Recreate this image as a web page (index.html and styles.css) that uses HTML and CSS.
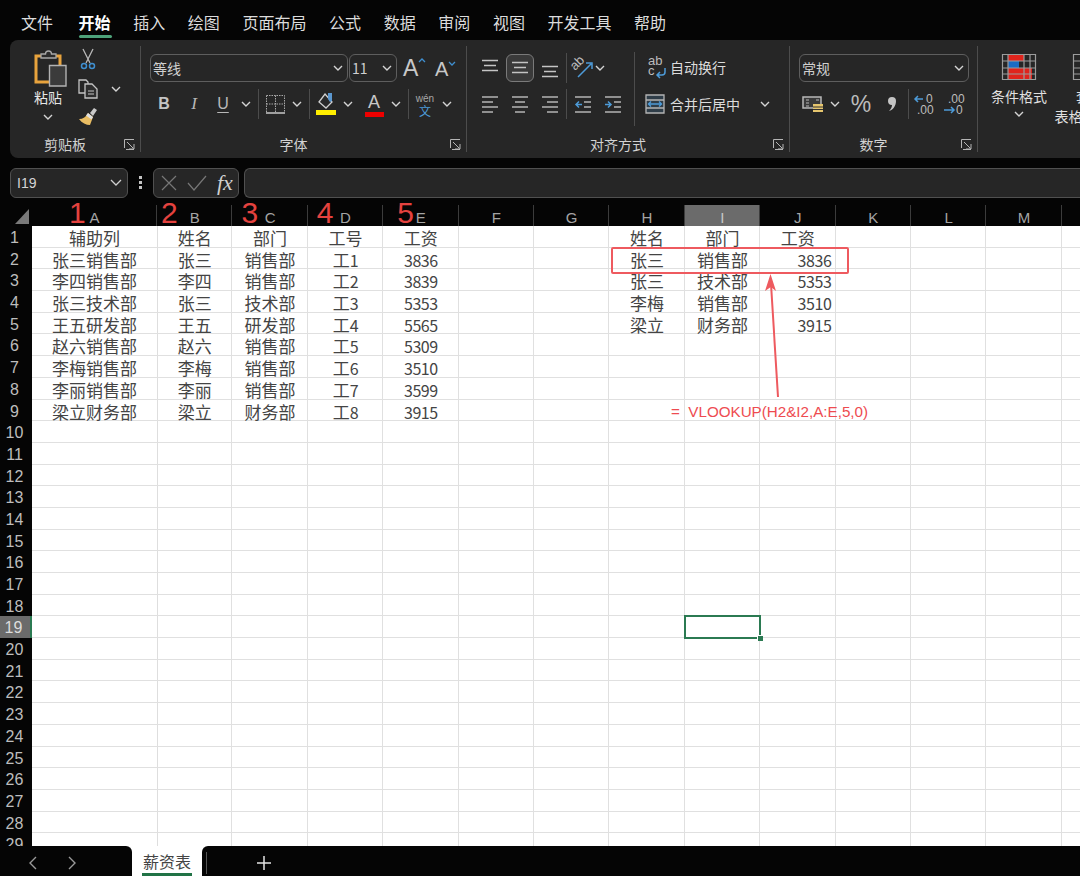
FILE: index.html
```html
<!DOCTYPE html>
<html lang="zh-CN">
<head>
  <meta charset="UTF-8" />
  <title>薪资表 - Excel</title>
  <link rel="stylesheet" href="styles.css">
</head>
<body>
  <svg class="defs" width="0" height="0">
    <symbol id="chev" viewBox="0 0 10 6"><path d="M1 1l4 4 4-4" fill="none" stroke="#d4d4d4" stroke-width="1.4"/></symbol>
    <symbol id="launcher" viewBox="0 0 11 11"><path d="M.5 9V.5H10M3 3l6.5 6.5M10 5v5H5M2 10.5h8" fill="none" stroke="#b5b5b5"/></symbol>
    <symbol id="lines-top" viewBox="0 0 18 14"><path d="M1 1.5h16M3 6.5h12M1 11.5h16" stroke="#c4c4c4" stroke-width="1.4"/></symbol>
    <symbol id="lines-left" viewBox="0 0 18 18"><path d="M1 2h16M1 7h11M1 12h16M1 17h11" stroke="#b4b4b4" stroke-width="1.5"/></symbol>
    <symbol id="lines-center" viewBox="0 0 18 18"><path d="M1 2h16M4 7h10M1 12h16M4 17h10" stroke="#b4b4b4" stroke-width="1.5"/></symbol>
    <symbol id="lines-right" viewBox="0 0 18 18"><path d="M1 2h16M6 7h11M1 12h16M6 17h11" stroke="#b4b4b4" stroke-width="1.5"/></symbol>
  </svg>

  <nav class="tabs">
    <span class="tab first">文件</span>
    <span class="tab active">开始</span>
    <span class="tab">插入</span>
    <span class="tab">绘图</span>
    <span class="tab">页面布局</span>
    <span class="tab">公式</span>
    <span class="tab">数据</span>
    <span class="tab">审阅</span>
    <span class="tab">视图</span>
    <span class="tab">开发工具</span>
    <span class="tab">帮助</span>
  </nav>

  <section class="ribbon">
    <div class="group group-clipboard">
      <div class="clipboard">
        <div class="paste">
          <svg class="paste-icon" viewBox="0 0 34 38" width="34" height="38">
            <path d="M3 7h24v26H3z" fill="none" stroke="#e8a33d" stroke-width="3"/>
            <path d="M8 9V5h4.500a3 3 0 0 1 6 0H23v4z" fill="#2c2c2c" stroke="#a8a8a8" stroke-width="1.300"/>
            <path d="M16.500 16.500h16.500v20.500H16.500z" fill="#3b3b3b" stroke="#b2b2b2" stroke-width="1.400"/>
          </svg>
          <span class="paste-label">粘贴</span>
          <svg class="chev"><use href="#chev"/></svg>
        </div>
        <div class="clip-tools">
          <svg viewBox="0 0 16 22" width="16" height="22">
            <path d="M3 1l7 14M13 1L6 15" fill="none" stroke="#b8b8b8" stroke-width="1.300"/>
            <circle cx="4" cy="18" r="2.500" fill="none" stroke="#3f8fd0" stroke-width="1.500"/>
            <circle cx="12" cy="18" r="2.500" fill="none" stroke="#3f8fd0" stroke-width="1.500"/>
          </svg>
          <svg viewBox="0 0 20 20" width="20" height="20">
            <path d="M1 1h7l2 2v11H1z" fill="none" stroke="#c4c4c4" stroke-width="1.300"/>
            <path d="M7 5h7l5 5v9H7z" fill="#2e2e2e" stroke="#c4c4c4" stroke-width="1.300"/>
            <path d="M10 12h6M10 15h6" stroke="#c4c4c4"/>
          </svg>
          <svg viewBox="0 0 20 20" width="20" height="20">
            <path d="M12 6l4-5 3 2-4 6z" fill="#c9c9c9"/>
            <path d="M10 6l5 4-3 8c-4 0-8-2-11-6 4 0 7-2 9-6z" fill="#e9bd63"/>
            <path d="M10 6l5 4-1.500 2.500-5.500-4z" fill="#e0e0e0"/>
          </svg>
        </div>
        <svg class="chev clip-chev"><use href="#chev"/></svg>
      </div>
      <div class="group-foot"><span class="group-name">剪贴板</span><svg class="launcher"><use href="#launcher"/></svg></div>
    </div>

    <div class="group group-font">
      <div class="tool-row">
        <div class="combo combo-font"><span>等线</span><svg class="chev"><use href="#chev"/></svg></div>
        <div class="combo combo-size"><span>11</span><svg class="chev"><use href="#chev"/></svg></div>
        <span class="size-btn size-up">A<svg viewBox="0 0 8 5" width="8" height="5"><path d="M1 4l3-3 3 3" fill="none" stroke="#3f8fd0" stroke-width="1.300"/></svg></span>
        <span class="size-btn size-down">A<svg viewBox="0 0 8 5" width="8" height="5"><path d="M1 1l3 3 3-3" fill="none" stroke="#3f8fd0" stroke-width="1.300"/></svg></span>
      </div>
      <div class="tool-row row-low">
        <span class="tool tool-w30 glyph-b">B</span>
        <span class="tool tool-w30 glyph-i">I</span>
        <span class="tool tool-w28 glyph-u">U</span>
        <svg class="chev chev-slot"><use href="#chev"/></svg>
        <i class="vsep"></i>
        <span class="tool">
          <svg viewBox="0 0 19 19" width="19" height="19">
            <path d="M.5.500h18v17M.5.500v17M9.500.500v17M.5 9h18" fill="none" stroke="#a8a8a8" stroke-dasharray="1.500 1"/>
            <path d="M0 18h19" stroke="#c8c8c8" stroke-width="1.500"/>
          </svg>
        </span>
        <svg class="chev chev-slot"><use href="#chev"/></svg>
        <i class="vsep"></i>
        <span class="tool">
          <svg viewBox="0 0 20 24" width="20" height="24">
            <path d="M9 2l7 8-6 6-7-6z" fill="#2a2a2a" stroke="#d0d0d0" stroke-width="1.300"/>
            <path d="M12 1h4v8l-2 1-2-3z" fill="#5b97cf"/>
            <path d="M0 18h20v5H0z" fill="#ffee00"/>
          </svg>
        </span>
        <svg class="chev chev-slot"><use href="#chev"/></svg>
        <span class="tool color-a">A<i></i></span>
        <svg class="chev chev-slot"><use href="#chev"/></svg>
        <i class="vsep"></i>
        <span class="tool wen"><b>wén</b><em>文</em></span>
        <svg class="chev chev-slot"><use href="#chev"/></svg>
      </div>
      <div class="group-foot"><span class="group-name">字体</span><svg class="launcher"><use href="#launcher"/></svg></div>
    </div>

    <div class="group group-align">
      <div class="align-body">
        <div class="align-left">
          <div class="tool-row">
            <span class="tool tool-w30 tool-up"><svg width="18" height="14"><use href="#lines-top"/></svg></span>
            <span class="tool tool-w30 tool-on"><svg width="18" height="14"><use href="#lines-top"/></svg></span>
            <span class="tool tool-w30 tool-down"><svg width="18" height="14"><use href="#lines-top"/></svg></span>
            <i class="vsep vsep-tight"></i>
            <span class="tool tool-w30">
              <svg viewBox="0 0 20 20" width="20" height="20">
                <text class="svg-label" transform="translate(2 13) rotate(-45)">ab</text>
                <path d="M5 19L18 6M13 5h6v6" fill="none" stroke="#4d9bd8" stroke-width="1.500"/>
              </svg>
            </span>
            <svg class="chev chev-pull"><use href="#chev"/></svg>
          </div>
          <div class="tool-row row-low">
            <span class="tool tool-w30"><svg width="18" height="18"><use href="#lines-left"/></svg></span>
            <span class="tool tool-w30"><svg width="18" height="18"><use href="#lines-center"/></svg></span>
            <span class="tool tool-w30"><svg width="18" height="18"><use href="#lines-right"/></svg></span>
            <i class="vsep vsep-tight"></i>
            <span class="tool tool-w30">
              <svg viewBox="0 0 18 18" width="18" height="18">
                <path d="M1 2h16M10 7h7M10 12h7M1 17h16" stroke="#b4b4b4" stroke-width="1.500"/>
                <path d="M8 9.500H2M5 6.500l-3 3 3 3" fill="none" stroke="#4d9bd8" stroke-width="1.500"/>
              </svg>
            </span>
            <span class="tool tool-w30">
              <svg viewBox="0 0 18 18" width="18" height="18">
                <path d="M1 2h16M10 7h7M10 12h7M1 17h16" stroke="#b4b4b4" stroke-width="1.500"/>
                <path d="M1 9.500h6M4 6.500l3 3-3 3" fill="none" stroke="#4d9bd8" stroke-width="1.500"/>
              </svg>
            </span>
          </div>
        </div>
        <i class="vsep vsep-tall"></i>
        <div class="align-right">
          <div class="wide-btn">
            <svg class="wrap-icon" viewBox="0 0 24 24" width="24" height="24">
              <text class="svg-label" x="3" y="10">ab</text>
              <text class="svg-label" x="3" y="20">c</text>
              <path d="M12 20h5a3 3 0 0 0 3-3v-4M15 17l-3 3 3 3" fill="none" stroke="#4d9bd8" stroke-width="1.500"/>
            </svg>
            <span>自动换行</span>
          </div>
          <div class="wide-btn wide-low">
            <svg class="merge-icon" viewBox="0 0 20 20" width="20" height="20">
              <path d="M1 1h18v18H1z" fill="#2f3d48" stroke="#b4b4b4" stroke-width="1.300"/>
              <path d="M1 6h18M1 14h18" stroke="#b4b4b4" stroke-width="1.300"/>
              <path d="M3 10h14M6 7.500L3.500 10 6 12.500M14 7.500l2.500 2.500-2.500 2.500" fill="none" stroke="#4d9bd8" stroke-width="1.300"/>
            </svg>
            <span>合并后居中</span>
            <svg class="chev merge-chev"><use href="#chev"/></svg>
          </div>
        </div>
      </div>
      <div class="group-foot"><span class="group-name">对齐方式</span><svg class="launcher"><use href="#launcher"/></svg></div>
    </div>

    <div class="group group-number">
      <div class="tool-row">
        <div class="combo combo-format"><span>常规</span><svg class="chev"><use href="#chev"/></svg></div>
      </div>
      <div class="tool-row row-low number-tools">
        <span class="tool money">
          <svg viewBox="0 0 22 18" width="22" height="18">
            <path d="M1 2h18v11H1z" fill="#3a3a3a" stroke="#b8b8b8" stroke-width="1.500"/>
            <path d="M4 5h3M4 8h3M4 11h3M14 5h3" stroke="#b8b8b8"/>
            <path d="M11 9h10v8H11z" fill="#e6c66e"/>
            <path d="M11 12h10M11 14.500h10" stroke="#333"/>
          </svg>
        </span>
        <svg class="chev money-chev"><use href="#chev"/></svg>
        <span class="tool percent">%</span>
        <span class="tool comma">
          <svg viewBox="0 0 10 16" width="10" height="16"><path d="M5 1a4 4 0 0 1 4 4c0 5-3 9-7 10 2-2 3-4 3-6a4 4 0 0 1 0-8z" fill="#c4c4c4"/></svg>
        </span>
        <i class="vsep dec-sep"></i>
        <span class="tool dec">
          <svg viewBox="0 0 24 22" width="24" height="22">
            <path d="M11 6H3M6 3L3 6l3 3" fill="none" stroke="#4d9bd8" stroke-width="1.500"/>
            <text class="svg-num" x="14" y="10">0</text>
            <text class="svg-num" x="5" y="21">.00</text>
          </svg>
        </span>
        <span class="tool dec">
          <svg viewBox="0 0 24 22" width="24" height="22">
            <text class="svg-num" x="6" y="10">.00</text>
            <path d="M2 17h10M9 14l3 3-3 3" fill="none" stroke="#4d9bd8" stroke-width="1.500"/>
            <text class="svg-num" x="14" y="21">0</text>
          </svg>
        </span>
      </div>
      <div class="group-foot"><span class="group-name">数字</span><svg class="launcher"><use href="#launcher"/></svg></div>
    </div>

    <div class="group group-styles">
      <div class="style-btn">
        <svg viewBox="0 0 34 26" width="34" height="26">
          <path d="M6 0h16v7H6zM6 14h24v12H6z" fill="#e0241c"/>
          <path d="M6 7h11v7H6z" fill="#1a6cc4"/>
          <path d="M.500.500h33v25H.500zM.5 7h33M.5 14h33M.5 20h33M6 0v26M22 0v26M28 0v26" fill="none" stroke="#9c9c9c" stroke-width="1.200"/>
        </svg>
        <span>条件格式</span>
        <svg class="chev"><use href="#chev"/></svg>
      </div>
      <div class="style-btn style-table">
        <svg viewBox="0 0 34 26" width="34" height="26">
          <path d="M.500.500h33v25H.500zM.5 7h33M.5 14h33M.5 20h33M9 0v26M20 0v26" fill="none" stroke="#9c9c9c" stroke-width="1.200"/>
        </svg>
        <span>套用</span>
        <span class="style-line">表格格式<svg class="chev"><use href="#chev"/></svg></span>
      </div>
    </div>
  </section>

  <section class="formula-bar">
    <div class="fbox name-box"><span>I19</span><svg class="name-chev" viewBox="0 0 12 7" width="12" height="7"><path d="M1 1l5 5 5-5" fill="none" stroke="#cfcfcf" stroke-width="1.300"/></svg></div>
    <span class="grip"><i></i><i></i><i></i></span>
    <div class="fbox fx-box">
      <svg viewBox="0 0 16 16" width="16" height="16"><path d="M1 1l14 14M15 1L1 15" stroke="#777" stroke-width="1.200"/></svg>
      <svg viewBox="0 0 20 16" width="20" height="16"><path d="M1 8l6 7L19 1" fill="none" stroke="#777" stroke-width="1.200"/></svg>
      <span class="fx">fx</span>
    </div>
    <div class="fbox fx-input"></div>
  </section>

  <main class="sheet">
    <div class="col-heads">
      <span class="corner"><svg viewBox="0 0 14 15" width="14" height="15"><path d="M14 0v15H0z" fill="#7a7a7a"/></svg></span>
      <span class="col">A<b class="mark mark-a">1</b></span>
      <span class="col">B<b class="mark mark-b">2</b></span>
      <span class="col">C<b class="mark mark-c">3</b></span>
      <span class="col">D<b class="mark mark-d">4</b></span>
      <span class="col">E<b class="mark mark-e">5</b></span>
      <span class="col">F</span>
      <span class="col">G</span>
      <span class="col">H</span>
      <span class="col col-on">I</span>
      <span class="col">J</span>
      <span class="col">K</span>
      <span class="col">L</span>
      <span class="col">M</span>
      <span class="col">N</span>
    </div>

    <div class="rows">
      <div class="row"><span class="rh">1</span><span>辅助列</span><span>姓名</span><span>部门</span><span>工号</span><span>工资</span><span></span><span></span><span>姓名</span><span>部门</span><span>工资</span></div>
      <div class="row"><span class="rh">2</span><span>张三销售部</span><span>张三</span><span>销售部</span><span>工<em>1</em></span><span><em>3836</em></span><span></span><span></span><span>张三</span><span>销售部</span><span class="val"><em>3836</em></span></div>
      <div class="row"><span class="rh">3</span><span>李四销售部</span><span>李四</span><span>销售部</span><span>工<em>2</em></span><span><em>3839</em></span><span></span><span></span><span>张三</span><span>技术部</span><span class="val"><em>5353</em></span></div>
      <div class="row"><span class="rh">4</span><span>张三技术部</span><span>张三</span><span>技术部</span><span>工<em>3</em></span><span><em>5353</em></span><span></span><span></span><span>李梅</span><span>销售部</span><span class="val"><em>3510</em></span></div>
      <div class="row"><span class="rh">5</span><span>王五研发部</span><span>王五</span><span>研发部</span><span>工<em>4</em></span><span><em>5565</em></span><span></span><span></span><span>梁立</span><span>财务部</span><span class="val"><em>3915</em></span></div>
      <div class="row"><span class="rh">6</span><span>赵六销售部</span><span>赵六</span><span>销售部</span><span>工<em>5</em></span><span><em>5309</em></span></div>
      <div class="row"><span class="rh">7</span><span>李梅销售部</span><span>李梅</span><span>销售部</span><span>工<em>6</em></span><span><em>3510</em></span></div>
      <div class="row"><span class="rh">8</span><span>李丽销售部</span><span>李丽</span><span>销售部</span><span>工<em>7</em></span><span><em>3599</em></span></div>
      <div class="row"><span class="rh">9</span><span>梁立财务部</span><span>梁立</span><span>财务部</span><span>工<em>8</em></span><span><em>3915</em></span></div>
      <div class="row"><span class="rh">10</span></div>
      <div class="row"><span class="rh">11</span></div>
      <div class="row"><span class="rh">12</span></div>
      <div class="row"><span class="rh">13</span></div>
      <div class="row"><span class="rh">14</span></div>
      <div class="row"><span class="rh">15</span></div>
      <div class="row"><span class="rh">16</span></div>
      <div class="row"><span class="rh">17</span></div>
      <div class="row"><span class="rh">18</span></div>
      <div class="row"><span class="rh rh-on">19</span></div>
      <div class="row"><span class="rh">20</span></div>
      <div class="row"><span class="rh">21</span></div>
      <div class="row"><span class="rh">22</span></div>
      <div class="row"><span class="rh">23</span></div>
      <div class="row"><span class="rh">24</span></div>
      <div class="row"><span class="rh">25</span></div>
      <div class="row"><span class="rh">26</span></div>
      <div class="row"><span class="rh">27</span></div>
      <div class="row"><span class="rh">28</span></div>
      <div class="row"><span class="rh">29</span></div>

      <!-- things lying over the cells -->
      <div class="cursor"><i></i></div>
      <div class="red-box"></div>
      <svg class="red-arrow" viewBox="0 0 24 124" width="24" height="124">
        <path d="M18 123L11 10" stroke="#ee5a5f" stroke-width="2"/>
        <path d="M10.500 0L16 17 10.800 13 5 17z" fill="#ee5a5f"/>
      </svg>
      <div class="red-formula">=&nbsp; VLOOKUP(H2&amp;I2,A:E,5,0)</div>
    </div>
  </main>

  <footer class="sheet-tabs">
    <div class="tab-nav">
      <svg viewBox="0 0 8 14" width="8" height="14"><path d="M7 1L1 7l6 6" fill="none" stroke="#9a9a9a" stroke-width="1.400"/></svg>
      <svg viewBox="0 0 8 14" width="8" height="14"><path d="M1 1l6 6-6 6" fill="none" stroke="#9a9a9a" stroke-width="1.400"/></svg>
    </div>
    <div class="sheet-tab"><span>薪资表</span></div>
    <div class="tab-rest">
      <i class="tab-div"></i>
      <svg viewBox="0 0 14 14" width="14" height="14"><path d="M7 0v14M0 7h14" stroke="#e4e4e4" stroke-width="1.500"/></svg>
    </div>
  </footer>
</body>
</html>
```

FILE: styles.css
```css
* {
  box-sizing: border-box;
}

html, body {
  margin: 0;
  height: 100%;
}

body {
  display: flex;
  flex-direction: column;
  width: 1080px;
  height: 876px;
  overflow: hidden;
  background: #050505;
  color: #d8d8d8;
  font-family: "Noto Sans CJK SC", "Liberation Sans", sans-serif;
  font-size: 14px;
}

.defs {
  position: absolute;
}

svg {
  display: block;
  flex: none;
  overflow: visible;
}

/* Menu tabs */

.tabs {
  display: flex;
  flex: none;
  gap: 22.6px;
  height: 40px;
  padding-left: 21px;
}

.tab {
  position: relative;
  font-size: 16px;
  line-height: 44px;
  color: #dcdcdc;
}

.tab.first {
  margin-right: 3px;
}

.tab.active {
  color: #fff;
  font-weight: 700;
}

.tab.active::after {
  content: "";
  position: absolute;
  left: 0;
  right: -1px;
  top: 35px;
  height: 3px;
  border-radius: 2px;
  background: #4ea27a;
}

/* Ribbon */

.ribbon {
  display: flex;
  flex: none;
  height: 118px;
  margin-left: 10px;
  padding: 6px 0;
  border-radius: 8px 0 0 8px;
  background: #262626;
}

.group {
  display: flex;
  flex-direction: column;
  flex: none;
  position: relative;
  padding-top: 8px;
  border-right: 1px solid #4c4c4c;
}

.group-clipboard { width: 131px; padding-top: 0; }
.group-font { width: 326px; padding-left: 8px; }
.group-align { width: 323px; padding-left: 8px; }
.group-number { width: 188px; padding-left: 9px; }
.group-styles { flex-direction: row; width: 110px; padding-left: 3px; border-right: 0; }

.group-foot {
  display: flex;
  align-items: center;
  margin-top: auto;
  margin-left: -9px;
  height: 16px;
}

.group-clipboard .group-foot { margin-left: 0; }
.group-font .group-foot,
.group-align .group-foot { margin-left: -8px; }

.group-name {
  flex: 1;
  text-align: center;
  color: #d2d2d2;
  font-size: 14px;
}

.launcher {
  width: 11px;
  height: 11px;
  margin: 0 5px 0 4px;
}

.chev {
  width: 10px;
  height: 6px;
}

.tool-row {
  display: flex;
  align-items: center;
  height: 28px;
}

.row-low {
  height: 32px;
  margin-top: 6px;
}

.tool {
  display: flex;
  align-items: center;
  justify-content: center;
  flex: none;
  width: 26px;
  height: 28px;
}

.tool-w30 { width: 30px; }
.tool-w28 { width: 28px; }

.chev-slot {
  box-sizing: content-box;
  padding: 0 4px;
}

.vsep {
  flex: none;
  width: 1px;
  height: 30px;
  margin: 0 3px;
  background: #4c4c4c;
}

.vsep-tight {
  margin: 0 1px;
}

/* Clipboard */

.clipboard {
  display: flex;
  height: 92px;
  padding-left: 18px;
}

.paste {
  display: flex;
  flex-direction: column;
  align-items: center;
  width: 40px;
  padding-top: 3px;
}

.paste-icon {
  margin-left: 3px;
}

.paste-label {
  font-size: 14px;
  line-height: 20px;
  color: #e6e6e6;
}

.paste .chev {
  margin-top: 7px;
}

.clip-tools {
  display: flex;
  flex-direction: column;
  align-items: center;
  justify-content: space-between;
  width: 24px;
  height: 80px;
  margin: 1px 0 0 8px;
  padding: 1px 0 0;
}

.clip-chev {
  margin: 40px 0 0 11px;
}

/* Font */

.combo {
  display: flex;
  align-items: center;
  justify-content: space-between;
  height: 28px;
  padding: 0 4px 1px 2px;
  border: 1px solid #5e5e5e;
  border-radius: 6px;
  background: #262626;
  color: #d0d0d0;
  font-size: 14px;
}

.combo-font { width: 198px; margin-left: 1px; }
.combo-size { width: 48px; margin-left: 1px; padding-left: 2px; }
.combo-format { width: 170px; }

.size-btn {
  display: flex;
  flex: none;
  align-items: flex-start;
  font-family: "Liberation Sans", sans-serif;
  color: #c8c8c8;
}

.size-up { width: 32px; margin-left: 6px; font-size: 23px; }
.size-down { width: 30px; font-size: 20px; padding-top: 2px; }

.size-btn svg {
  margin-top: 3px;
}

.glyph-b {
  font: 700 16px "Liberation Sans", sans-serif;
  color: #c4c4c4;
}

.glyph-i {
  font: italic 400 17px "Liberation Serif", serif;
  color: #b8b8b8;
}

.glyph-u {
  font: 400 16px "Liberation Sans", sans-serif;
  color: #b8b8b8;
  text-decoration: underline;
  text-underline-offset: 3px;
}

.color-a {
  flex-direction: column;
  margin-left: 4px;
  font: 400 18px/20px "Liberation Sans", sans-serif;
  color: #c8c8c8;
}

.color-a i {
  width: 19px;
  height: 5px;
  background: #ee0000;
}

.wen {
  flex-direction: column;
  padding-top: 2px;
}

.wen b {
  font: 400 10px/11px "Liberation Sans", sans-serif;
  color: #a8a8a8;
}

.wen em {
  font-style: normal;
  font-size: 12px;
  line-height: 13px;
  color: #4d9bd8;
}

/* Alignment */

.align-body {
  display: flex;
}

.align-left {
  width: 159px;
}

.tool-up { padding-bottom: 5px; }
.tool-down { padding-top: 8px; }

.tool-on {
  width: 28px;
  margin: 0 1px;
  border: 1px solid #7a7a7a;
  border-radius: 6px;
  background: #3a3a3a;
}

.chev-pull {
  margin-left: -3px;
}

.vsep-tall {
  height: 74px;
  margin: -2px 0 0;
}

.align-right {
  padding-left: 10px;
  font-size: 14px;
  color: #dcdcdc;
}

.wide-btn {
  display: flex;
  align-items: center;
  gap: 1px;
  height: 26px;
}

.wide-low {
  height: 32px;
  margin-top: 8px;
  gap: 5px;
}

.merge-chev {
  margin-left: 15px;
}

.svg-label {
  font: 400 13px "Liberation Sans", sans-serif;
  fill: #bcbcbc;
}

.svg-num {
  font: 400 12px "Liberation Sans", sans-serif;
  fill: #bcbcbc;
}

/* Number */

.number-tools {
  margin-left: 1px;
}

.money-chev {
  margin-left: 4px;
}

.percent {
  width: 26px;
  margin-left: 8px;
  font: 400 23px "Liberation Sans", sans-serif;
  color: #bcbcbc;
}

.comma {
  width: 26px;
  margin-left: 5px;
}

.dec-sep {
  margin: 0 0 0 3px;
}

.dec {
  width: 30px;
}

/* Styles */

.style-btn {
  display: flex;
  flex: none;
  flex-direction: column;
  align-items: center;
  width: 76px;
  color: #e0e0e0;
  line-height: 20px;
}

.style-btn span {
  white-space: nowrap;
}

.style-btn svg + span {
  margin-top: 6px;
}

.style-btn > .chev {
  margin-top: 5px;
}

.style-table {
  width: 72px;
  margin-left: -3px;
}

.style-line {
  display: flex;
  align-items: center;
  gap: 5px;
}

/* Formula bar */

.formula-bar {
  display: flex;
  flex: none;
  align-items: center;
  height: 31px;
  margin-top: 9px;
  padding-left: 10px;
}

.fbox {
  display: flex;
  align-items: center;
  height: 30px;
  border: 1px solid #505050;
  border-radius: 6px;
  background: #262626;
}

.name-box {
  justify-content: space-between;
  width: 118px;
  padding: 0 5px 0 6px;
  color: #d4d4d4;
  font: 400 14px "Liberation Sans", sans-serif;
}

.grip {
  display: flex;
  flex-direction: column;
  gap: 2px;
  width: 25px;
  padding-left: 11px;
}

.grip i {
  width: 3px;
  height: 3px;
  background: #c4c4c4;
}

.fx-box {
  gap: 10px;
  width: 86px;
  padding-left: 7px;
}

.fx {
  font: italic 400 22px "Liberation Serif", serif;
  color: #d0d0d0;
}

.fx-input {
  flex: 1;
  margin-left: 5px;
  border-right: 0;
  border-radius: 6px 0 0 6px;
}

/* Sheet */

.sheet {
  display: flex;
  flex-direction: column;
  flex: 1;
  min-height: 0;
  padding-top: 7px;
  overflow: hidden;
}

.col-heads {
  display: grid;
  flex: none;
  grid-template-columns: 32px 125px repeat(13, 75.4px);
  height: 21px;
  color: #a4a4a4;
  font: 400 15px/26px "Liberation Sans", sans-serif;
}

.corner {
  display: flex;
  justify-content: flex-end;
  padding: 4px 3px 0 0;
}

.col {
  position: relative;
  padding-left: 1px;
  text-align: center;
  border-right: 1px solid #3c3c3c;
}

.col-on {
  background: #6b6b6b;
  border-bottom: 2px solid #2b7a52;
  color: #c8c8c8;
}

.mark {
  position: absolute;
  top: -3px;
  font: 400 30px/22px "Liberation Sans", sans-serif;
  color: #e4423f;
}

.mark-a { left: 37px; }
.mark-b { left: 4px; }
.mark-c { left: 9px; }
.mark-d { left: 9px; }
.mark-e { left: 14px; }

.rows {
  position: relative;
  flex: 1;
  min-height: 0;
  color: #444;
  background:
    linear-gradient(#dedede, #dedede) 156.500px 0 / 1px 100% no-repeat,
    repeating-linear-gradient(90deg, transparent 0 74.400px, #e0e0e0 74.400px 75.400px) right top / 923px 100% no-repeat,
    #fff;
}

.row {
  display: grid;
  grid-template-columns: 32px 125px repeat(13, 75.4px);
  grid-auto-rows: 21px;
  height: 21.7px;
  padding-top: 1px;
  border-bottom: 1px solid #e0e0e0;
  font-size: 17px;
  line-height: 21px;
  text-align: center;
  white-space: nowrap;
}

.row em {
  font: 400 16px/21px "Noto Sans CJK SC", sans-serif;
  letter-spacing: -0.4px;
}

.val {
  padding-right: 4px;
  text-align: right;
}

.rh {
  margin: -1px 0;
  padding: 1px 3px 0 0;
  background: #050505;
  color: #bdbdbd;
  font: 400 16px/21px "Liberation Sans", sans-serif;
}

.rh-on {
  background: #6b6b6b;
  border-right: 2px solid #2b7a52;
  color: #dcdcdc;
}

.cursor {
  position: absolute;
  left: 684px;
  top: 389px;
  width: 77px;
  height: 24px;
  border: 2px solid #2b7a52;
}

.cursor i {
  position: absolute;
  right: -4px;
  bottom: -4px;
  width: 6px;
  height: 6px;
  background: #2b7a52;
  border: 1px solid #fff;
  border-width: 1px 0 0 1px;
}

.red-box {
  position: absolute;
  left: 611px;
  top: 21px;
  width: 238px;
  height: 27px;
  border: 2px solid #ee5a5f;
  border-radius: 2px;
}

.red-arrow {
  position: absolute;
  left: 760px;
  top: 48px;
}

.red-formula {
  position: absolute;
  left: 671px;
  top: 175px;
  color: #ee4b50;
  font: 400 15.200px/22px "Liberation Sans", sans-serif;
  white-space: nowrap;
}

/* Sheet tabs */

.sheet-tabs {
  display: flex;
  flex: none;
  height: 30px;
  background: #fff;
}

.tab-nav {
  display: flex;
  align-items: center;
  gap: 31px;
  width: 132px;
  padding: 4px 0 0 29px;
  background: #050505;
  border-top-right-radius: 6px;
}

.sheet-tab {
  width: 70px;
  padding: 0 10px;
}

.sheet-tab span {
  display: block;
  height: 30px;
  border-bottom: 3px solid #217346;
  color: #444;
  font-size: 16px;
  line-height: 30px;
  text-align: center;
}

.tab-rest {
  display: flex;
  align-items: center;
  flex: 1;
  padding: 4px 0 0 4px;
  background: #050505;
  border-top-left-radius: 6px;
}

.tab-div {
  width: 1px;
  height: 22px;
  margin-right: 50px;
  background: #555;
}
```
